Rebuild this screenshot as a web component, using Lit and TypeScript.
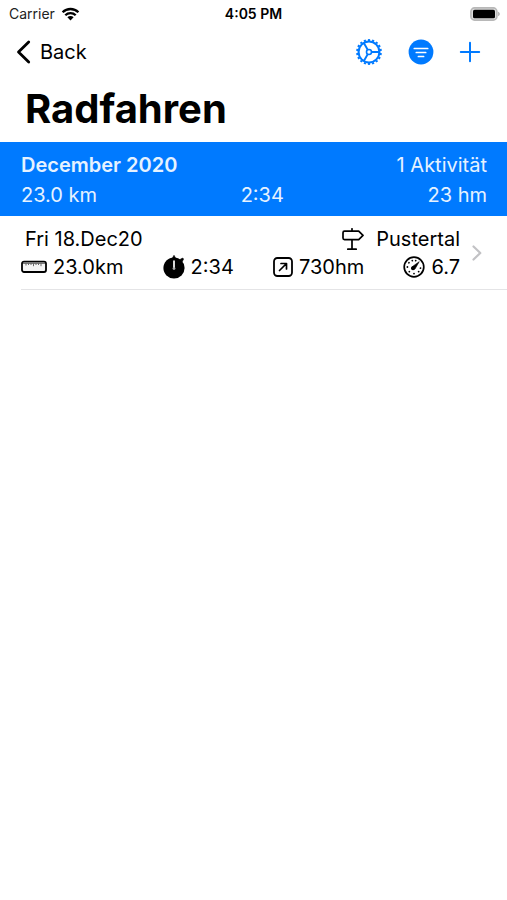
import { LitElement, html, css, svg } from "lit";
import { customElement, property } from "lit/decorators.js";

const teeth = Array.from({ length: 18 }, (_, i) => i * 20);
const ticks = [-140, -105, -75, 10, 45, 90, 135, 180];

const icons = {
  wifi: svg`<svg width="19" height="14" viewBox="0 0 19 14" aria-hidden="true">
    <path d="M1.6 5.2a11.3 11.3 0 0 1 15.8 0M4.3 8.2a7.4 7.4 0 0 1 10.4 0" fill="none" stroke="currentColor" stroke-width="2.3"/>
    <path d="M6.4 10.2a4.4 4.4 0 0 1 6.2 0L9.5 13.4z" fill="currentColor"/></svg>`,
  battery: svg`<svg width="30" height="14" viewBox="0 0 30 14" role="img" aria-label="Battery full">
    <rect x="0.9" y="0.9" width="26" height="12.2" rx="3.6" fill="#ddd" stroke="#b8b8b8" stroke-width="1.6"/>
    <rect x="3" y="2.7" width="22" height="8.6" rx="1.6" fill="#000"/>
    <path d="M28.2 4.8c2 .7 2 3.7 0 4.4z" fill="#a8a8a8"/></svg>`,
  back: svg`<svg width="15" height="24" viewBox="0 0 15 24" aria-hidden="true">
    <path d="M12.7 2L2.5 12l10.2 10" fill="none" stroke="currentColor" stroke-width="2.8" stroke-linecap="round" stroke-linejoin="round"/></svg>`,
  gear: svg`<svg width="28" height="28" viewBox="-14 -14 28 28" aria-hidden="true">
    <g fill="none" stroke="currentColor">
      <circle r="10.4" stroke-width="2"/>
      <circle r="2.5" stroke-width="1.6"/>
      <path d="M2.6 0H10M-1.3-2.3L-5-8.700M-1.3 2.3L-5 8.700" stroke-width="1.9"/>
      ${teeth.map((a) => svg`<path d="M11 0H12.9" stroke-width="2.2" transform="rotate(${a + 10})"/>`)}
    </g></svg>`,
  filter: svg`<svg width="26" height="26" viewBox="0 0 26 26" aria-hidden="true">
    <circle cx="13" cy="13" r="12.4" fill="currentColor"/>
    <path d="M6.3 9.5h13.4M8.300 13.5h9.4M10.4 17.5h5.2" stroke="#fff" stroke-width="1.7" stroke-linecap="round"/></svg>`,
  plus: svg`<svg width="22" height="22" viewBox="0 0 22 22" aria-hidden="true">
    <path d="M11 1.8v18.4M1.8 11h18.4" stroke="currentColor" stroke-width="2" stroke-linecap="round"/></svg>`,
  sign: svg`<svg width="22" height="23" viewBox="0 0 22 23" aria-hidden="true">
    <path d="M10 .8v2M10 11.7v9M5.8 21.2h8.4M2.5 3.2h14.2L21 7.4l-4.3 4.2H2.5q-1.5 0-1.5-1.5V4.7q0-1.5 1.5-1.5z" fill="none" stroke="currentColor" stroke-width="1.7" stroke-linejoin="round" stroke-linecap="round"/></svg>`,
  ruler: svg`<svg width="26" height="14" viewBox="0 0 26 14" aria-hidden="true">
    <rect x="1" y="1.6" width="24" height="10.4" rx="2" fill="#f4f4f4" stroke="currentColor" stroke-width="1.8"/>
    <path d="M2 3.4h22" stroke="#777" stroke-width="1.2"/>
    <path d="M5 3v2.500M7.5 3v2M10 3v2M12.500 3v3.200M15 3v2M17.500 3v2M20 3v3.200" stroke="#666" stroke-width="1"/></svg>`,
  watch: svg`<svg width="22" height="24" viewBox="0 0 22 24" aria-hidden="true">
    <circle cx="11" cy="13" r="10.6" fill="currentColor"/>
    <path d="M9.2 3.500L11 .300l1.800 3.200zM17 4.500l2.600-1.500 1 1-1.400 2.700z" fill="currentColor" stroke="currentColor" stroke-width=".6"/>
    <path d="M11 6v7" stroke="#fff" stroke-width="1.7" stroke-linecap="round"/>
    <circle cx="11" cy="13.6" r="1.4" fill="#aaa"/></svg>`,
  climb: svg`<svg width="20" height="20" viewBox="0 0 20 20" aria-hidden="true">
    <rect x="1" y="1" width="18" height="18" rx="3.4" fill="none" stroke="currentColor" stroke-width="1.8"/>
    <path d="M6.5 13.5L13 7M8 6.500h5.500V12" fill="none" stroke="currentColor" stroke-width="1.7" stroke-linecap="round" stroke-linejoin="round"/></svg>`,
  gauge: svg`<svg width="22" height="22" viewBox="-11 -11 22 22" aria-hidden="true">
    <circle r="9.8" fill="none" stroke="currentColor" stroke-width="1.7"/>
    ${ticks.map((a) => svg`<circle cx="6.6" r=".9" fill="currentColor" transform="rotate(${a})"/>`)}
    <path d="M-1.8 2.200L-2.200 0L5.200-5.300L1 2z" fill="currentColor" stroke="currentColor" stroke-width=".6" stroke-linejoin="round"/>
    <circle cx="-1" cy="1.2" r="2" fill="currentColor"/></svg>`,
  next: svg`<svg width="10" height="16" viewBox="0 0 10 16" aria-hidden="true">
    <path d="M1.5 1.500L8.300 8l-6.800 6.500" fill="none" stroke="#c2c2c5" stroke-width="2.2" stroke-linecap="round" stroke-linejoin="round"/></svg>`,
};

interface Activity {
  date: string;
  place: string;
  distance: string;
  duration: string;
  ascent: string;
  score: string;
}

@customElement("status-bar")
export class StatusBar extends LitElement {
  static styles = css`
    :host {
      display: grid;
      grid-template-columns: 1fr auto 1fr;
      align-items: center;
      height: 28px;
      padding: 0 7px;
      font-size: 14px;
    }
    .carrier {
      display: flex;
      align-items: center;
      gap: 6px;
      padding-left: 2px;
      color: #222;
    }
    .carrier svg { color: #000; }
    .time { font-weight: 600; }
    .battery { display: flex; justify-content: flex-end; }
  `;
  render() {
    return html`
      <span class="carrier">Carrier ${icons.wifi}</span>
      <span class="time">4:05 PM</span>
      <span class="battery">${icons.battery}</span>
    `;
  }
}

@customElement("activity-row")
export class ActivityRow extends LitElement {
  @property({ attribute: false }) activity!: Activity;

  static styles = css`
    :host { display: block; padding-left: 21px; }
    .row {
      display: flex;
      align-items: center;
      gap: 12px;
      padding: 9px 25px 8px 0;
      border-bottom: 1px solid #e4e4e6;
      color: #000;
      text-decoration: none;
    }
    .body { flex: 1; }
    .line, .stat, .place { display: flex; align-items: center; }
    .line { justify-content: space-between; height: 28px; }
    .date { padding-left: 4px; }
    .stat { gap: 6px; }
    .place { gap: 12px; }
    svg { flex: none; }
  `;
  render() {
    const a = this.activity;
    return html`
      <a class="row" href="#activity">
        <div class="body">
          <div class="line">
            <span class="date">${a.date}</span>
            <span class="place">${icons.sign}${a.place}</span>
          </div>
          <div class="line">
            <span class="stat">${icons.ruler}${a.distance}</span>
            <span class="stat">${icons.watch}${a.duration}</span>
            <span class="stat">${icons.climb}${a.ascent}</span>
            <span class="stat">${icons.gauge}${a.score}</span>
          </div>
        </div>
        ${icons.next}
      </a>
    `;
  }
}

@customElement("app-root")
export class AppRoot extends LitElement {
  private activities: Activity[] = [
    { date: "Fri 18.Dec20", place: "Pustertal", distance: "23.0km", duration: "2:34", ascent: "730hm", score: "6.7" },
  ];

  static styles = css`
    :host {
      display: block;
      min-height: 100vh;
      background: #fff;
      color: #000;
      font-family: Inter, "Liberation Sans", sans-serif;
      font-size: 20px;
      line-height: 28px;
    }
    .nav {
      display: flex;
      align-items: center;
      justify-content: space-between;
      height: 48px;
      padding: 0 26px 0 16px;
    }
    button {
      display: flex;
      align-items: center;
      padding: 0;
      border: 0;
      background: none;
      color: #007aff;
      font: inherit;
      cursor: pointer;
    }
    .back { gap: 9px; color: #000; }
    .actions { display: flex; align-items: center; gap: 25px; }
    h1 {
      margin: 0;
      padding: 8px 25px;
      font-size: 40px;
      font-weight: 700;
      line-height: 50px;
    }
    .month {
      padding: 8px 20px 6px 21px;
      background: #007aff;
      color: #e6f2ff;
    }
    .summary, .totals { display: flex; justify-content: space-between; line-height: 30px; }
    h2 { margin: 0; font-size: 20px; font-weight: 600; line-height: inherit; }
  `;
  render() {
    return html`
      <status-bar></status-bar>
      <nav class="nav">
        <button class="back">${icons.back}Back</button>
        <div class="actions">
          <button aria-label="Settings">${icons.gear}</button>
          <button aria-label="Filter">${icons.filter}</button>
          <button aria-label="Add">${icons.plus}</button>
        </div>
      </nav>
      <h1>Radfahren</h1>
      <main>
        <header class="month">
          <div class="summary"><h2>December 2020</h2><span>1 Aktivität</span></div>
          <div class="totals"><span>23.0 km</span><span>2:34</span><span>23 hm</span></div>
        </header>
        ${this.activities.map((a) => html`<activity-row .activity=${a}></activity-row>`)}
      </main>
    `;
  }
}
